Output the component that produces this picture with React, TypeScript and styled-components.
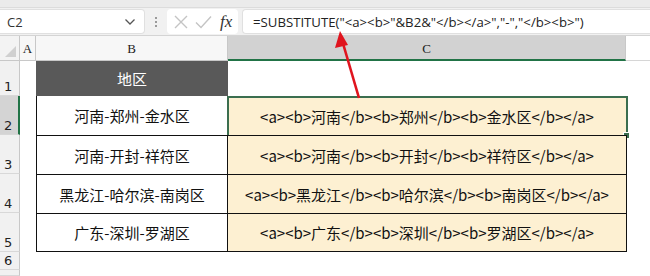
import React, { FC } from 'react';
import styled, { createGlobalStyle } from 'styled-components';

const GlobalStyle = createGlobalStyle`
  html, body {
    margin: 0;
    padding: 0;
    background: #ffffff;
  }
`;

const rows = [
  { region: '河南-郑州-金水区', result: '<a><b>河南</b><b>郑州</b><b>金水区</b></a>' },
  { region: '河南-开封-祥符区', result: '<a><b>河南</b><b>开封</b><b>祥符区</b></a>' },
  { region: '黑龙江-哈尔滨-南岗区', result: '<a><b>黑龙江</b><b>哈尔滨</b><b>南岗区</b></a>' },
  { region: '广东-深圳-罗湖区', result: '<a><b>广东</b><b>深圳</b><b>罗湖区</b></a>' }
];

const formula = '=SUBSTITUTE("<a><b>"&B2&"</b></a>","-","</b><b>")';

const Page = styled.div`
  position: relative;
  width: 650px;
  height: 276px;
  overflow: hidden;
  background: #ffffff;
  font-family: 'Noto Sans CJK SC', sans-serif;
`;

const TopStrip = styled.div`
  height: 8px;
  background: #ebebeb;
  border-bottom: 1px solid #dcdcdc;
  box-sizing: border-box;
`;

const FormulaBar = styled.div`
  display: flex;
  align-items: stretch;
  height: 28px;
  padding: 1px 0 1px 0;
  box-sizing: border-box;
  background: #f1f1f1;
  border-bottom: 1px solid #d4d4d4;
`;

const NameBox = styled.div`
  display: flex;
  align-items: center;
  justify-content: space-between;
  width: 145px;
  padding: 0 8px 0 7px;
  box-sizing: border-box;
  background: #ffffff;
  border: 1px solid #e0e0e0;
  border-left: none;
  border-radius: 0 4px 4px 0;
  font-family: 'Open Sans', 'Liberation Sans', sans-serif;
  font-size: 13px;
  color: #333333;
`;

const Grip = styled.div`
  display: flex;
  flex-direction: column;
  justify-content: center;
  gap: 2px;
  width: 22px;
  align-items: center;
`;

const GripDot = styled.span`
  width: 2px;
  height: 2px;
  background: #9a9a9a;
`;

const FxBox = styled.div`
  display: flex;
  align-items: center;
  gap: 7px;
  width: 71px;
  padding: 0 0 0 7px;
  box-sizing: border-box;
  background: #ffffff;
  border-radius: 4px;
  margin-right: 4px;
`;

const Fx = styled.span`
  font-family: 'Liberation Serif', serif;
  font-style: italic;
  font-size: 17px;
  color: #333333;
  margin-left: 1px;
`;

const FormulaInput = styled.div`
  flex: 1;
  display: flex;
  align-items: center;
  padding-left: 10px;
  background: #ffffff;
  border: 1px solid #e0e0e0;
  border-right: none;
  border-radius: 4px 0 0 4px;
  font-family: 'Open Sans', 'Liberation Sans', sans-serif;
  font-size: 13.2px;
  color: #222222;
  white-space: pre;
`;

const Sheet = styled.div`
  display: grid;
  grid-template-columns: 20px 16px 192px 398px 1fr;
  grid-template-rows: 25px 35px 39px 39px 39px 39px 18px 1fr;
  height: 240px;
`;

const Corner = styled.div`
  position: relative;
  background: #f3f3f3;
  border-right: 1px solid #c8c8c8;
  border-bottom: 1px solid #c8c8c8;
  &::after {
    content: '';
    position: absolute;
    right: 3px;
    bottom: 3px;
    border-style: solid;
    border-width: 0 0 11px 11px;
    border-color: transparent transparent #d0d0d0 transparent;
  }
`;

const ColHead = styled.div<{ selected?: boolean }>`
  display: flex;
  align-items: center;
  justify-content: center;
  background: ${({ selected }) => (selected ? '#d2d2d2' : '#f7f7f7')};
  border-right: 1px solid #c8c8c8;
  border-bottom: ${({ selected }) => (selected ? '2px solid #217346' : '1px solid #c8c8c8')};
  font-family: 'Liberation Serif', 'DejaVu Serif', serif;
  font-size: 13px;
  color: #222222;
  padding-top: 2px;
`;

const BlankHead = styled.div`
  background: #ffffff;
  border-bottom: 1px solid #d6d6d6;
`;

const RowHead = styled.div<{ selected?: boolean }>`
  display: flex;
  align-items: flex-end;
  padding: 0 0 0 4px;
  background: ${({ selected }) => (selected ? '#d4d4d4' : '#f1f1f1')};
  border-right: ${({ selected }) => (selected ? '2px solid #217346' : '1px solid #c8c8c8')};
  border-bottom: 1px solid #d8d8d8;
  font-family: 'DejaVu Sans', sans-serif;
  font-size: 13px;
  line-height: 16px;
  color: #222222;
`;

const Blank = styled.div`
  background: #ffffff;
`;

const TitleCell = styled.div`
  display: flex;
  align-items: center;
  justify-content: center;
  background: #595959;
  color: #ffffff;
  font-size: 15px;
`;

const Cell = styled.div<{ result?: boolean; first?: boolean; last?: boolean }>`
  position: relative;
  display: flex;
  align-items: center;
  justify-content: center;
  background: ${({ result }) => (result ? '#fdf0d2' : '#ffffff')};
  border-left: ${({ result }) => (result ? 'none' : '1px solid #111111')};
  border-right: 1px solid #111111;
  border-top: ${({ first }) => (first ? 'none' : '1px solid #111111')};
  border-bottom: ${({ last }) => (last ? '1px solid #111111' : 'none')};
  margin-right: ${({ result }) => (result ? '-1px' : '0')};
  font-size: 15px;
  color: #111111;
  white-space: pre;
`;

const Selection = styled.div`
  position: absolute;
  inset: -1px -2px -2px -1px;
  border: 2px solid #3b6e4f;
  pointer-events: none;
  &::after {
    content: '';
    position: absolute;
    right: -4px;
    bottom: -4px;
    width: 5px;
    height: 5px;
    background: #3b6e4f;
    border: 1px solid #ffffff;
  }
`;

const Arrow = styled.svg`
  position: absolute;
  left: 330px;
  top: 26px;
  pointer-events: none;
`;

const Chevron = () => (
  <svg width="12" height="8" viewBox="0 0 12 8">
    <path d="M1.5 1.5 L6 6 L10.5 1.5" fill="none" stroke="#555" strokeWidth="1.3" />
  </svg>
);

const App: FC = () => (
  <Page>
    <GlobalStyle />
    <TopStrip />
    <FormulaBar>
      <NameBox>
        <span>C2</span>
        <Chevron />
      </NameBox>
      <Grip>
        <GripDot />
        <GripDot />
        <GripDot />
      </Grip>
      <FxBox>
        <svg width="14" height="14" viewBox="0 0 14 14">
          <path d="M1 1 L13 13 M13 1 L1 13" stroke="#c4c4c4" strokeWidth="1.4" fill="none" />
        </svg>
        <svg width="17" height="14" viewBox="0 0 17 14">
          <path d="M1 7.5 L6 12.5 L16 1.5" stroke="#c4c4c4" strokeWidth="1.4" fill="none" />
        </svg>
        <Fx>fx</Fx>
      </FxBox>
      <FormulaInput>{formula}</FormulaInput>
    </FormulaBar>
    <Sheet>
      <Corner />
      <ColHead>A</ColHead>
      <ColHead>B</ColHead>
      <ColHead selected>C</ColHead>
      <BlankHead />

      <RowHead>1</RowHead>
      <Blank />
      <TitleCell>地区</TitleCell>
      <Blank />
      <Blank />

      {rows.map((row, i) => (
        <React.Fragment key={row.region}>
          <RowHead selected={i === 0}>{i + 2}</RowHead>
          <Blank />
          <Cell first={i === 0} last={i === rows.length - 1}>
            {row.region}
          </Cell>
          <Cell result first={false} last={i === rows.length - 1}>
            {row.result}
            {i === 0 && <Selection />}
          </Cell>
          <Blank />
        </React.Fragment>
      ))}

      <RowHead>6</RowHead>
      <Blank />
      <Blank />
      <Blank />
      <Blank />

      <RowHead />
      <Blank />
      <Blank />
      <Blank />
      <Blank />
    </Sheet>
    <Arrow width="40" height="76" viewBox="0 0 40 76">
      <line x1="29" y1="72" x2="12" y2="14" stroke="#e0141e" strokeWidth="2.6" />
      <polygon points="10,5 5,22 18,19" fill="#e0141e" />
    </Arrow>
  </Page>
);

export default App;
